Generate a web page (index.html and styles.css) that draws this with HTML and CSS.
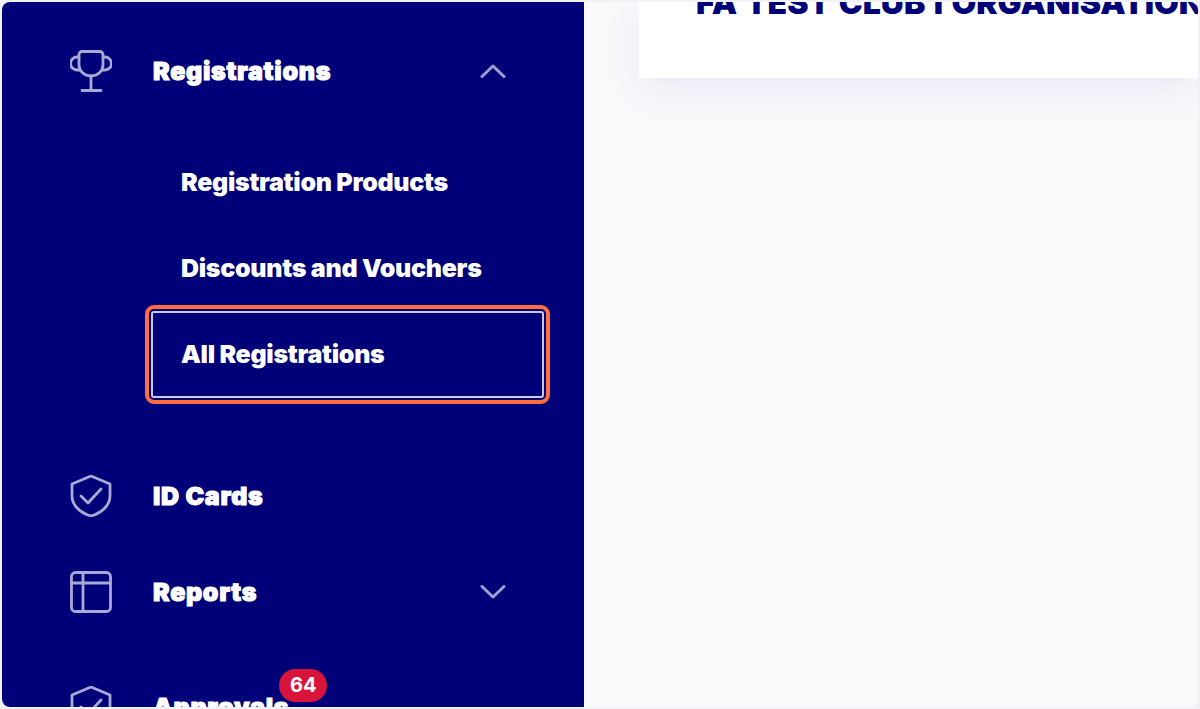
FILE: index.html
```html
<!DOCTYPE html>
<html lang="en">

<head>
	<meta charset="utf-8">
	<meta name="viewport" content="width=device-width, initial-scale=1.0">
	<title>All Registrations</title>
	<link rel="stylesheet" href="styles.css">
</head>

<body>
	<div class="frame">
		<nav class="sidebar">
			<div class="nav_row">
				<svg class="nav_icon" viewBox="0 0 42 42">
					<path d="M12 1.500h18a3 3 0 0 1 3 3V15a12 11 0 0 1-24 0V4.500a3 3 0 0 1 3-3z" />
					<path d="M9 7H7a6.500 6.500 0 0 0 0 13h3M33 7h2a6.500 6.500 0 0 1 0 13h-3M21 26v14M12 40.500h19" />
				</svg>
				<span class="nav_label">Registrations</span>
				<svg class="chevron" viewBox="0 0 28 14">
					<path d="M3 12.500 14 2l11 10.500" />
				</svg>
			</div>
			<ul class="sub_menu">
				<li class="sub_item">Registration Products</li>
				<li class="sub_item">Discounts and Vouchers</li>
				<li class="sub_item sub_active">All Registrations</li>
			</ul>
			<div class="nav_row id_row">
				<svg class="nav_icon" viewBox="0 0 42 42">
					<path d="M21 1 40 9v12c0 10-9 17-19 20C11 38 2 31 2 21V9z" />
					<path d="M11 21l7 7 13-14" />
				</svg>
				<span class="nav_label">ID Cards</span>
			</div>
			<div class="nav_row">
				<svg class="nav_icon" viewBox="0 0 42 42">
					<rect x="1.500" y="1.500" width="39" height="39" rx="4" />
					<path d="M1.500 12h39M13 1.500v39" />
				</svg>
				<span class="nav_label">Reports</span>
				<svg class="chevron" viewBox="0 0 28 14">
					<path d="M3 1.500 14 12 25 1.500" />
				</svg>
			</div>
			<div class="nav_row approvals_row">
				<svg class="nav_icon" viewBox="0 0 42 42">
					<path d="M21 1 40 9v12c0 10-9 17-19 20C11 38 2 31 2 21V9z" />
					<path d="M11 21l7 7 13-14" />
				</svg>
				<span class="nav_label badge_holder">Approvals<span class="badge">64</span></span>
			</div>
		</nav>
		<main class="content">
			<header class="club_card">
				<h1 class="club_name">FA TEST CLUB I ORGANISATION</h1>
			</header>
		</main>
	</div>
</body>

</html>
```

FILE: styles.css
```css
* {
	margin: 0;
	padding: 0;
	box-sizing: border-box;
}

body {
	height: 709px;
	padding: 2px;
	overflow: hidden;
	background: #f1f1f8;
	font-family: 'Inter', sans-serif;
}

.frame {
	display: flex;
	height: 705px;
	border-radius: 8px;
	overflow: hidden;
}

.sidebar {
	flex: 0 0 582px;
	padding-top: 21px;
	background: #000078;
	color: #fff;
}

.nav_row {
	display: flex;
	align-items: center;
	height: 96px;
	padding: 0 77px 0 68px;
}

.nav_icon {
	flex: 0 0 42px;
	width: 42px;
	height: 42px;
	margin-right: 41px;
	fill: none;
	stroke: #a9a9d6;
	stroke-width: 2.800;
	stroke-linejoin: round;
	stroke-linecap: round;
}

.nav_label {
	font-size: 25px;
	font-weight: 900;
	letter-spacing: 0.7px;
	-webkit-text-stroke: 1px #fff;
}

.chevron {
	width: 28px;
	height: 14px;
	margin-left: auto;
	fill: none;
	stroke: #a0a0d0;
	stroke-width: 3;
	stroke-linecap: round;
	stroke-linejoin: round;
}

.sub_menu {
	list-style: none;
	padding: 20px 0 0 149px;
	margin-right: 40px;
}

.sub_item {
	display: flex;
	align-items: center;
	height: 86px;
	padding-left: 30px;
	font-size: 25px;
	font-weight: 900;
	letter-spacing: -0.3px;
}

.sub_active {
	height: 87px;
	border: 2px solid #c9c9e6;
	border-radius: 3px;
	padding: 0 0 1px 28px;
	outline: 4px solid #ff6c3f;
	outline-offset: 2px;
}

.id_row {
	margin-top: 50px;
}

.approvals_row {
	margin-top: 19px;
}

.badge_holder {
	position: relative;
}

.badge {
	position: absolute;
	top: -23px;
	right: -38px;
	width: 48px;
	height: 33px;
	border-radius: 17px;
	background: #d8143a;
	color: #fff;
	font-size: 20px;
	font-weight: 700;
	letter-spacing: 0;
	line-height: 33px;
	text-align: center;
	-webkit-text-stroke: 0;
}

.content {
	flex: 1;
	min-width: 0;
	padding-left: 55px;
	background: #f9f9fc;
}

.club_card {
	display: flex;
	align-items: flex-end;
	height: 76px;
	padding: 0 0 60px 57px;
	background: #fff;
	box-shadow: 0 10px 40px rgba(40, 40, 140, 0.08);
}

.club_name {
	color: #000078;
	font-size: 32px;
	font-weight: 900;
	line-height: 30px;
	word-spacing: 2px;
	white-space: nowrap;
}
```
